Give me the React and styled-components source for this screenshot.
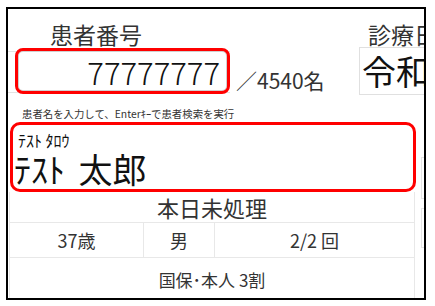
import styled, { createGlobalStyle } from "styled-components"

const GlobalStyle = createGlobalStyle`
    body {
        margin: 0;
        background: #fff;
        font-family: "Noto Sans CJK JP", "Noto Sans", sans-serif;
        color: #333;
    }
`

const Frame = styled.div`
    margin: 7px 0 0 6px;
    width: 420px;
    height: 293px;
    box-sizing: border-box;
    border: 2px solid #000;
    overflow: hidden;
    display: flex;
    flex-direction: column;
`

const Header = styled.div`
    display: flex;
    height: 86px;
    flex-shrink: 0;
`

const NumberBlock = styled.div`
    width: 351px;
    flex-shrink: 0;
`

const DateBlock = styled.div`
    flex: 1;
    min-width: 0;
`

const Label = styled.div`
    margin-top: 11px;
    padding-left: ${p => p.$indent}px;
    font-size: 23px;
    line-height: 28px;
    white-space: nowrap;
`

const NumberRow = styled.div`
    display: flex;
    align-items: flex-end;
`

const NumberCell = styled.div`
    margin-top: 3px;
    height: 42px;
    box-sizing: border-box;
    border-top: 1px solid #e4e4e4;
    border-bottom: 1px solid #e4e4e4;
    padding-left: 7px;
`

const RedInput = styled.div`
    margin: -4px 0 -2px;
    width: 215px;
    height: 46px;
    box-sizing: border-box;
    border: 3px solid #f00;
    border-radius: 8px;
    box-shadow: inset 0 0 0 1px #d0d0d0;
    padding: 1px 7px 0 0;
    text-align: right;
    font-size: 31px;
    font-weight: 300;
    line-height: 40px;
    color: #111;
`

const Count = styled.div`
    margin: 0 0 0 6px;
    font-size: 21px;
    line-height: 26px;
    white-space: nowrap;
`

const DateBox = styled.div`
    margin-top: -1px;
    height: 48px;
    box-sizing: border-box;
    border: 1px solid #e0e0e0;
    border-right: none;
    padding-left: 2px;
    font-size: 34px;
    line-height: 46px;
    color: #111;
    white-space: nowrap;
`

const Lower = styled.div`
    flex: 1;
    display: flex;
    min-height: 0;
`

const MainCol = styled.div`
    width: 408px;
    flex-shrink: 0;
    display: flex;
    flex-direction: column;
`

const Hint = styled.div`
    height: 27px;
    box-sizing: border-box;
    padding: 12px 0 0 14px;
    font-size: 10.4px;
    line-height: 14px;
    white-space: nowrap;
`

const NameBox = styled.div`
    margin-left: 2px;
    width: 406px;
    height: 70px;
    box-sizing: border-box;
    border: 3px solid #f00;
    border-radius: 10px;
    padding: 5px 0 0 5px;
    color: #111;
`

const Kana = styled.div`
    font-size: 16px;
    line-height: 20px;
`

const Name = styled.div`
    margin-left: -4px;
    font-size: 34px;
    line-height: 38px;
    word-spacing: 6px;
    white-space: nowrap;
`

const Table = styled.div`
    flex: 1;
    margin-left: 1px;
    width: 406px;
    box-sizing: border-box;
    border-left: 1px solid #e8e8e8;
    border-right: 1px solid #e8e8e8;
    display: flex;
    flex-direction: column;
`

const Status = styled.div`
    height: 30px;
    text-align: center;
    font-size: 22px;
    line-height: 30px;
`

const InfoRow = styled.div`
    height: 34px;
    border-top: 1px solid #e8e8e8;
    display: grid;
    grid-template-columns: 133px 71px 1fr;
`

const InfoCell = styled.div`
    text-align: center;
    font-size: 18px;
    line-height: 34px;
    border-left: ${p => (p.$first ? "none" : "1px solid #e8e8e8")};
`

const Insurance = styled.div`
    flex: 1;
    border-top: 1px solid #e8e8e8;
    text-align: center;
    padding-top: 10px;
    font-size: 17px;
    line-height: 24px;
`

const SideCol = styled.div`
    flex: 1;
    margin-left: 5px;
`

const SideBox = styled.div`
    margin-top: ${p => p.$top}px;
    height: ${p => p.$h}px;
    border: 1px solid #e4e4e4;
    border-right: none;
`

export default function App() {
    return (
        <>
            <GlobalStyle />
            <Frame>
                <Header>
                    <NumberBlock>
                        <Label $indent={42}>患者番号</Label>
                        <NumberRow>
                            <NumberCell>
                                <RedInput>77777777</RedInput>
                            </NumberCell>
                            <Count>／4540名</Count>
                        </NumberRow>
                    </NumberBlock>
                    <DateBlock>
                        <Label $indent={9}>診療日</Label>
                        <DateBox>令和</DateBox>
                    </DateBlock>
                </Header>
                <Lower>
                    <MainCol>
                        <Hint>患者名を入力して、Enterｷｰで患者検索を実行</Hint>
                        <NameBox>
                            <Kana>ﾃｽﾄ ﾀﾛｳ</Kana>
                            <Name>ﾃｽﾄ 太郎</Name>
                        </NameBox>
                        <Table>
                            <Status>本日未処理</Status>
                            <InfoRow>
                                <InfoCell $first>37歳</InfoCell>
                                <InfoCell>男</InfoCell>
                                <InfoCell>2/2 回</InfoCell>
                            </InfoRow>
                            <Insurance>国保･本人 3割</Insurance>
                        </Table>
                    </MainCol>
                    <SideCol>
                        <SideBox $top={62} $h={40} />
                        <SideBox $top={9} $h={38} />
                    </SideCol>
                </Lower>
            </Frame>
        </>
    )
}
